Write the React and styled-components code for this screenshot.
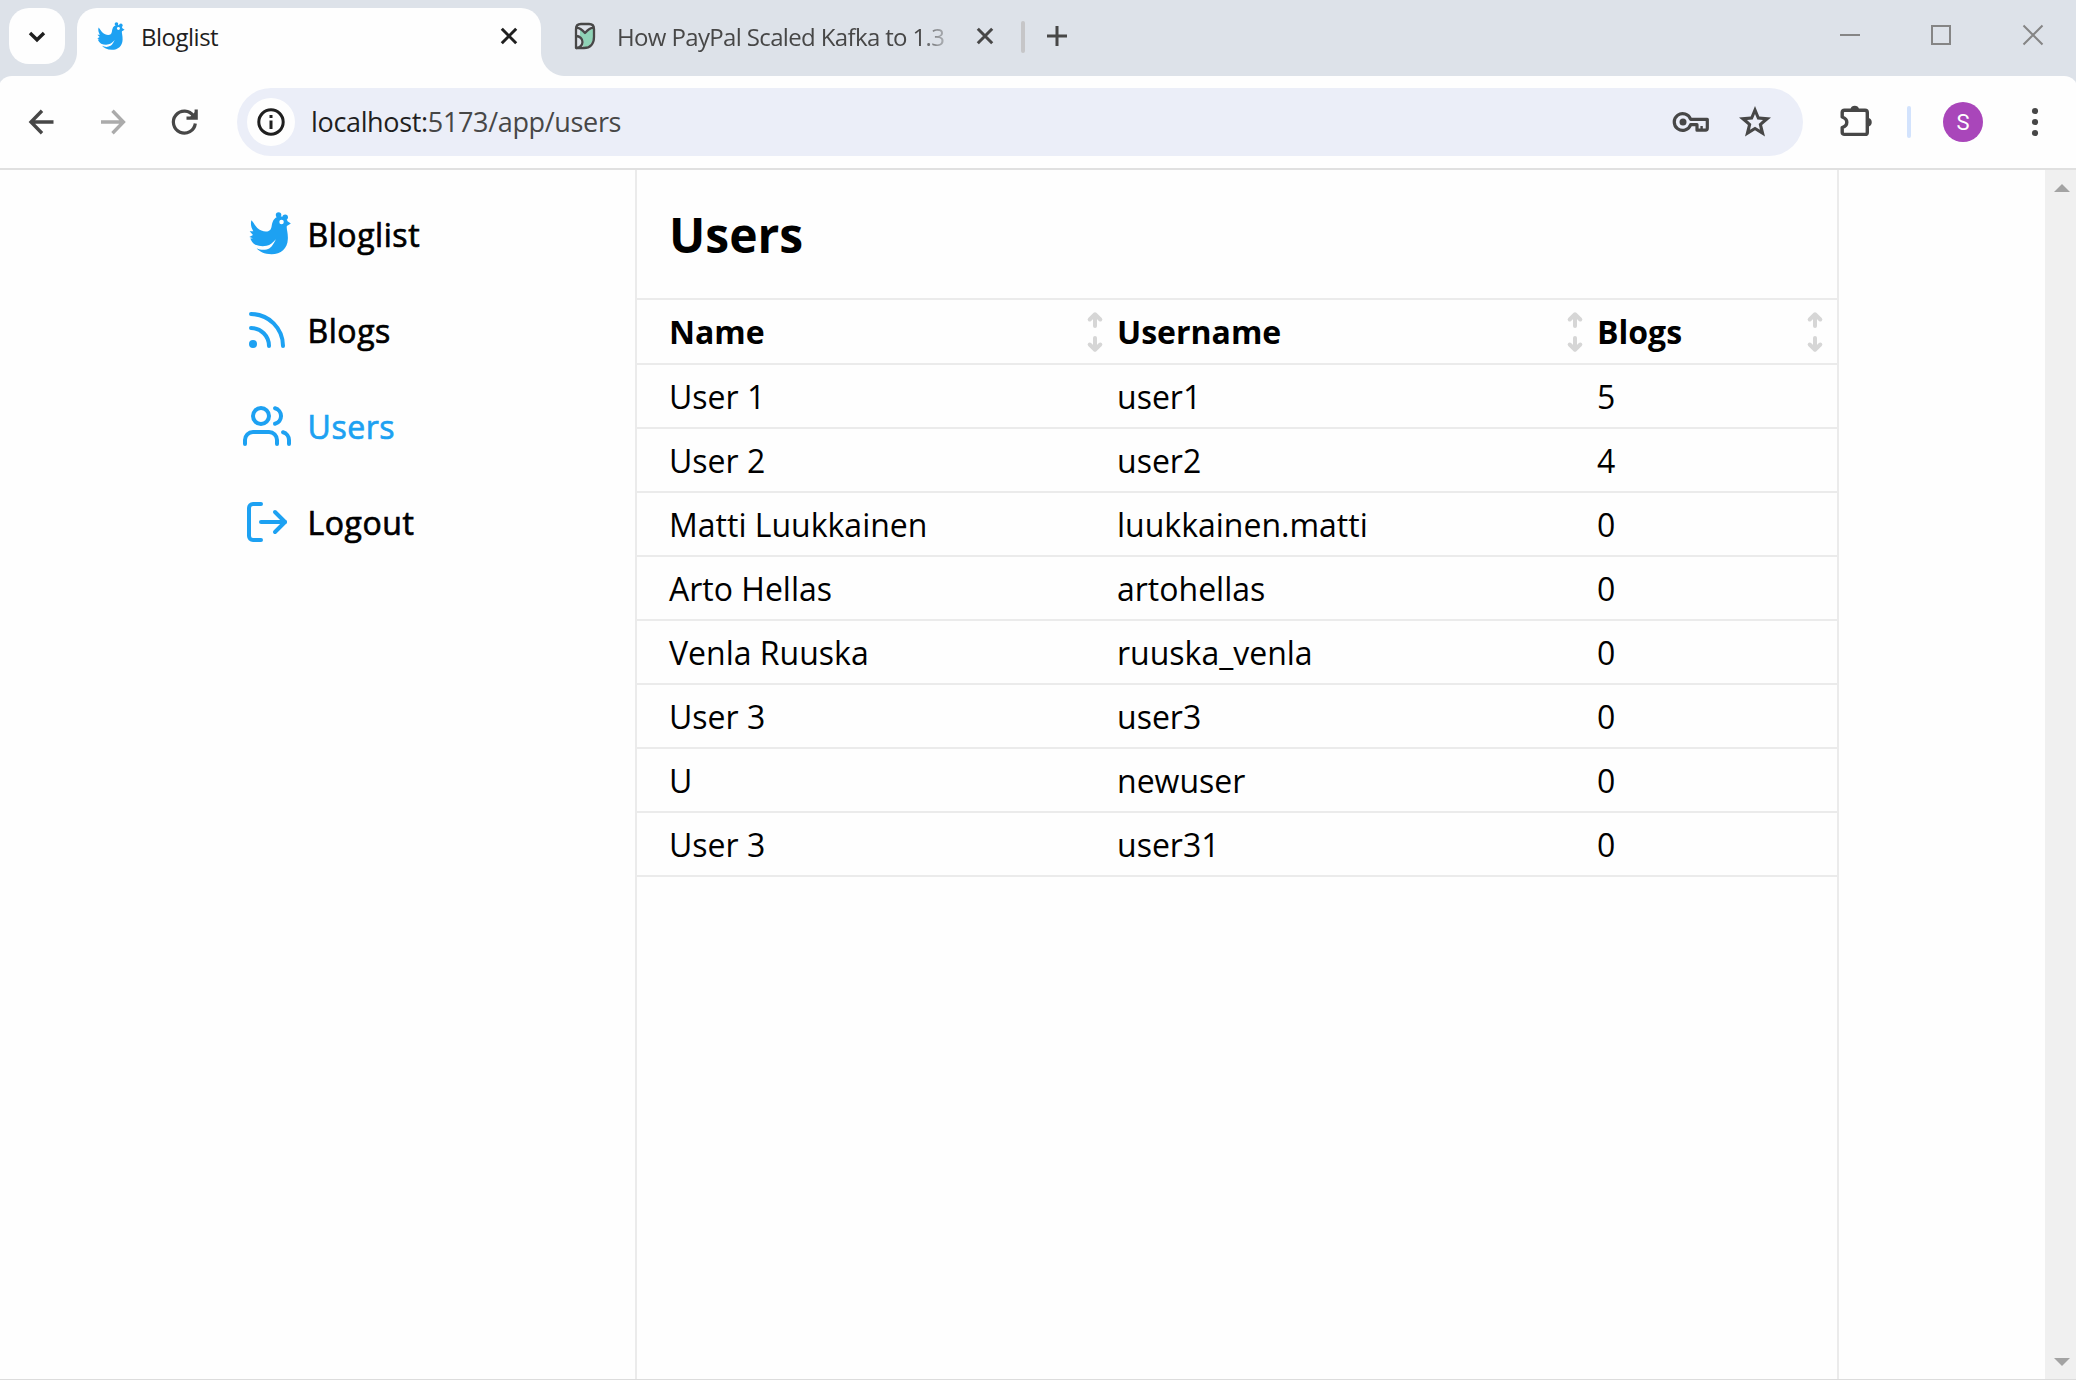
import React from "react";
import styled, { createGlobalStyle, css } from "styled-components";
import { FiRss, FiUsers, FiLogOut } from "react-icons/fi";

const GlobalStyle = createGlobalStyle`
  *, *::before, *::after { box-sizing: border-box; }
  html, body, #root { height: 100%; margin: 0; }
  body {
    overflow: hidden;
    background: #fefefe;
    color: #000;
    font-family: "Open Sans", "Noto Sans", sans-serif;
  }
  svg { display: block; flex: none; overflow: visible; }
`;

const Window = styled.div`
  display: flex;
  flex-direction: column;
  width: 2076px;
  height: 1380px;
  overflow: hidden;
  border-bottom: 1px solid #dcdcdc;
`;

/* ---------- browser chrome ---------- */

const TabStrip = styled.div`
  display: flex;
  height: 76px;
  padding: 8px 33px 0 9px;
  background: #dde2e9;
`;

const TabSearch = styled.div`
  display: flex;
  align-items: center;
  justify-content: center;
  width: 56px;
  height: 56px;
  margin-right: 12px;
  border-radius: 20px;
  background: #fefefe;
`;

const Tab = styled.div`
  position: relative;
  display: flex;
  align-items: center;
  height: ${(p) => (p.$active ? "68px" : "56px")};
  width: ${(p) => (p.$active ? "464px" : "480px")};
  padding: ${(p) => (p.$active ? "0 24px 12px 20px" : "0 28px 0 34px")};
  border-radius: 20px 20px 0 0;
  color: ${(p) => (p.$active ? "#1f1f1f" : "#474747")};

  ${(p) =>
    p.$active &&
    css`
      background: #fefefe;
      &::before,
      &::after {
        content: "";
        position: absolute;
        bottom: 0;
        width: 24px;
        height: 24px;
      }
      &::before {
        right: 100%;
        background: radial-gradient(circle at 0 0, transparent 23.5px, #fefefe 24.5px);
      }
      &::after {
        left: 100%;
        background: radial-gradient(circle at 100% 0, transparent 23.5px, #fefefe 24.5px);
      }
    `}
`;

const TabTitle = styled.span`
  flex: 1;
  overflow: hidden;
  margin: 2px 0 0 ${(p) => p.$gap}px;
  font-size: 24px;
  line-height: 36px;
  letter-spacing: ${(p) => p.$tracking}px;
  white-space: nowrap;
  ${(p) =>
    p.$fade &&
    css`
      flex: none;
      width: 328px;
      margin-right: 32px;
      -webkit-mask-image: linear-gradient(90deg, #000 302px, rgba(0, 0, 0, 0.3) 328px);
      mask-image: linear-gradient(90deg, #000 302px, rgba(0, 0, 0, 0.3) 328px);
    `}
`;

const TabDivider = styled.div`
  width: 4px;
  height: 32px;
  margin: 13px 22px 0 0;
  border-radius: 2px;
  background: #c6c6c8;
`;

const NewTab = styled.div`
  display: flex;
  align-items: center;
  height: 56px;
`;

const WindowControls = styled.div`
  display: flex;
  gap: 72px;
  margin-left: auto;
  padding-top: 17px;
`;

const Toolbar = styled.div`
  height: 94px;
  background: #dde2e9;
`;

const ToolbarInner = styled.div`
  display: flex;
  align-items: center;
  height: 94px;
  margin: 0 -2px;
  padding: 0 29px 0 29px;
  border-bottom: 2px solid #e0e0e0;
  border-radius: 14px 14px 0 0;
  background: #fefefe;
`;

const NavButtons = styled.div`
  display: flex;
  gap: 44px;
  width: 210px;
`;

const AddressBar = styled.div`
  display: flex;
  align-items: center;
  width: 1566px;
  height: 68px;
  padding: 0 32px 0 10px;
  border-radius: 34px;
  background: #ebeef8;
`;

const SiteInfo = styled.div`
  display: flex;
  align-items: center;
  justify-content: center;
  width: 48px;
  height: 48px;
  border-radius: 50%;
  background: #fefefe;
`;

const Url = styled.span`
  flex: 1;
  margin-left: 16px;
  color: #474747;
  font-size: 27px;
  line-height: 40px;
  letter-spacing: -0.34px;
`;

const Host = styled.span`
  color: #1f1f1f;
`;

const AddressActions = styled.div`
  display: flex;
  align-items: center;
  gap: 30px;
`;

const ToolbarEnd = styled.div`
  display: flex;
  align-items: center;
  margin-left: 37px;
`;

const Raised = styled.span`
  display: flex;
  padding-bottom: ${(p) => p.$by}px;
`;

const ToolbarDivider = styled.div`
  width: 4px;
  height: 32px;
  margin: 0 32px 0 34px;
  border-radius: 2px;
  background: #d3e3fd;
`;

const Avatar = styled.div`
  display: flex;
  align-items: center;
  justify-content: center;
  width: 40px;
  height: 40px;
  margin-right: 49px;
  border-radius: 50%;
  background: #a946ba;
  color: #fff;
  font-family: Roboto, sans-serif;
  font-size: 22px;
`;

/* ---------- page ---------- */

const Page = styled.div`
  display: flex;
  flex: 1;
  min-height: 0;
`;

const Sidebar = styled.nav`
  display: flex;
  flex-direction: column;
  gap: 32px;
  width: 635px;
  padding: 33px 0 0 243px;
`;

const NavItem = styled.a`
  display: flex;
  align-items: center;
  gap: 16.5px;
  height: 64px;
  color: ${(p) => (p.$active ? "#1da1f2" : "#000")};
  font-size: 32px;
  font-weight: 500;
  line-height: 64px;
  letter-spacing: 0.55px;
  -webkit-text-stroke: 0.7px currentColor;
`;

const NavIcon = styled.span`
  display: flex;
  justify-content: center;
  align-items: center;
  width: 48px;
  height: 48px;
  margin-bottom: 3px;
  color: #1da1f2;
`;

const BirdSlot = styled(NavIcon)`
  justify-content: flex-end;
`;

const Main = styled.main`
  width: 1204px;
  border: solid #ebebeb;
  border-width: 0 2px;
`;

const PageHeader = styled.header`
  display: flex;
  align-items: center;
  height: 130px;
  padding: 0 32px;
  border-bottom: 2px solid #ebebeb;
`;

const Title = styled.h1`
  margin: 2px 0 0;
  font-size: 48px;
  font-weight: 700;
  line-height: 64px;
`;

const Row = styled.div`
  display: grid;
  grid-template-columns: 480px 480px 240px;
  align-items: center;
  height: ${(p) => (p.$head ? 65 : 64)}px;
  padding-top: ${(p) => (p.$head ? 0 : 2)}px;
  border-bottom: 2px solid #ebebeb;
  font-size: 32px;
  font-weight: ${(p) => (p.$head ? 700 : 400)};
  line-height: 44px;
`;

const Cell = styled.div`
  display: flex;
  align-items: center;
  justify-content: space-between;
  padding: 0 14px 0 ${(p) => (p.$first ? 32 : 0)}px;
`;

const ScrollTrack = styled.div`
  display: flex;
  flex-direction: column;
  align-items: center;
  justify-content: space-between;
  width: 31px;
  margin-left: auto;
  padding: 14px 0 13px 2px;
  background: #f0f0f0;
`;

/* ---------- icons ---------- */

const Stroke = ({ w, h, color, sw, cap = "butt", d }) => (
  <svg width={w} height={h} viewBox={`0 0 ${w} ${h}`} fill="none" stroke={color} strokeWidth={sw} strokeLinecap={cap}>
    <path d={d} />
  </svg>
);

const Close = ({ color }) => (
  <Stroke w={16} h={16} color={color} sw={3} d="M0.8 0.8L15.2 15.2M15.2 0.8L0.8 15.2" />
);

const Bird = ({ size }) => (
  <svg width={size} height={size} viewBox="41 38 128 128" fill="#1da1f2">
    <circle cx="130" cy="47" r="8.300" />
    <circle cx="150" cy="53.500" r="8.300" />
    <path d="M48 63C56 70 58 79 66 86C73 92 83 97 92 97C102 97 107 93 109 82C111 68 115 57 126 53C138 49 155 53 157 66L167 73L155 80C153 89 159 99 158 119C157 148 137 165 109 165C87 165 72 157 64 147C76 153 91 154 103 147C112 141 116 131 122 120C113 130 105 137 94 140C82 143 71 141 60 137C52 132 48 126 45 118L53 117L42 113L53 107L43 96L54 96C48 86 45 76 48 63Z" />
    <circle cx="139" cy="68" r="6.800" fill="#fefefe" />
  </svg>
);

const Owl = () => (
  <svg width="20" height="26" viewBox="0 0 20 26" fill="none" stroke="#474747" strokeWidth="2.3" strokeLinejoin="round">
    <path d="M5 5.500L10 10L18 5.500V15C17.500 20 14 24 8 25L8.500 18L5 13Z" fill="#8fd3b6" stroke="none" />
    <path d="M1 25V6C1 3 3 1 6 1H14C17 1 19 3 19 6V14C19 21 15 25 9 25Z" />
    <path d="M1 5C4 4.500 6 5.500 10 10C14 5.500 16 4.500 19 5" />
    <path d="M1 13C5 13 7.500 16 7.500 19C7.500 22 5 25 1 25" />
  </svg>
);

const Reload = () => (
  <svg width="28" height="28" viewBox="0 0 28 28" fill="none" stroke="#474747" strokeWidth="3.2">
    <path d="M24.300 15.500A11 11 0 1 1 22.500 8" />
    <path d="M25.200 1.500V10.200H15.500" />
    <path d="M25 3V10H18Z" fill="#474747" stroke="none" />
  </svg>
);

const Info = () => (
  <svg width="28" height="28" viewBox="0 0 28 28" fill="none" stroke="#1f1f1f" strokeWidth="3">
    <circle cx="14" cy="14" r="12.200" />
    <path d="M14 12.500V21M14 7V10" />
  </svg>
);

const Key = () => (
  <svg width="36" height="20" viewBox="0 0 36 20" fill="none" stroke="#474747" strokeWidth="3.200" strokeLinejoin="round">
    <path d="M17.600 7.300A8.400 8.400 0 1 0 17.600 12.700H24V18.200H32.500Q34.300 18.200 34.300 16V7.300Z" />
    <circle cx="10" cy="10" r="3.500" fill="#474747" stroke="none" />
    <path d="M28.600 14V18" strokeWidth="2.400" />
  </svg>
);

const Star = () => (
  <svg width="32" height="31" viewBox="0 0 32 31" fill="#474747">
    <path
      fillRule="evenodd"
      d="M16 0L20.300 10.600L32 11.600L23.100 19.100L26 30.500L16 24.300L6 30.500L8.900 19.100L0 11.600L11.700 10.600ZM16 8L13.700 13.400L8 14L12.300 17.900L11 23.800L16 20.700L21 23.800L19.700 17.900L24 14L18.300 13.400Z"
    />
  </svg>
);

const Puzzle = () => (
  <svg width="33" height="32" viewBox="0 0 33 32" fill="none" stroke="#474747" strokeWidth="3.400" strokeLinejoin="round">
    <path d="M4.500 6.200H25Q27.300 6.200 27.300 8.500V28.200Q27.300 30.400 25 30.400H4.500Q2.200 30.400 2.200 28.200V23.500Q6.800 22 6.800 18.200Q6.800 14.500 2.200 13V8.500Q2.200 6.200 4.500 6.200Z" />
    <path d="M10.500 5A4.400 4.400 0 0 1 19 5ZM28.500 14A4.400 4.400 0 0 1 28.500 22.500Z" fill="#474747" stroke="none" />
  </svg>
);

const Menu = () => (
  <svg width="6" height="28" viewBox="0 0 6 28" fill="#474747">
    <circle cx="3" cy="3" r="3.100" />
    <circle cx="3" cy="14" r="3.100" />
    <circle cx="3" cy="25" r="3.100" />
  </svg>
);

const Sort = () => (
  <svg width="16" height="40" viewBox="0 0 16 40" fill="none" stroke="#d6d6d6" strokeWidth="4" strokeLinecap="round" strokeLinejoin="round">
    <path d="M8 14V2.500M2.700 7.500L8 2.300L13.300 7.500M8 26V37.500M2.700 32.500L8 37.700L13.300 32.500" />
  </svg>
);

const ScrollArrow = ({ down }) => (
  <svg width="16" height="8" viewBox="0 0 16 8" fill="#a3a3a3">
    <path d={down ? "M0 0H16L8 8Z" : "M0 8H16L8 0Z"} />
  </svg>
);

/* ---------- data ---------- */

const links = [
  { label: "Bloglist", icon: <Bird size={42.5} />, bird: true },
  { label: "Blogs", icon: <FiRss size={48} /> },
  { label: "Users", icon: <FiUsers size={48} />, active: true },
  { label: "Logout", icon: <FiLogOut size={48} /> },
];

const users = [
  ["User 1", "user1", 5],
  ["User 2", "user2", 4],
  ["Matti Luukkainen", "luukkainen.matti", 0],
  ["Arto Hellas", "artohellas", 0],
  ["Venla Ruuska", "ruuska_venla", 0],
  ["User 3", "user3", 0],
  ["U", "newuser", 0],
  ["User 3", "user31", 0],
];

export default function App() {
  return (
    <Window>
      <GlobalStyle />
      <TabStrip>
        <TabSearch>
          <Stroke w={16} h={9} color="#1f1f1f" sw={3.4} d="M1 1L8 7.8L15 1" />
        </TabSearch>
        <Tab $active>
          <Bird size={28} />
          <TabTitle $gap={16} $tracking={-0.5}>Bloglist</TabTitle>
          <Close color="#1f1f1f" />
        </Tab>
        <Tab>
          <Owl />
          <TabTitle $gap={22} $tracking={-0.64} $fade>How PayPal Scaled Kafka to 1.3</TabTitle>
          <Close color="#474747" />
        </Tab>
        <TabDivider />
        <NewTab>
          <Stroke w={20} h={20} color="#474747" sw={3} d="M10 0V20M0 10H20" />
        </NewTab>
        <WindowControls>
          <Stroke w={20} h={20} color="#858585" sw={2} d="M1 10H21" />
          <Stroke w={20} h={20} color="#858585" sw={2} d="M1 1H19V19H1Z" />
          <Stroke w={20} h={20} color="#858585" sw={2} d="M0.500 0.500L19.500 19.500M19.500 0.500L0.500 19.500" />
        </WindowControls>
      </TabStrip>
      <Toolbar>
        <ToolbarInner>
          <NavButtons>
            <Stroke w={28} h={28} color="#474747" sw={3.4} d="M26.500 14H4.500M15 2.800L4 14L15 25.200" />
            <Stroke w={28} h={28} color="#ababab" sw={3.4} d="M2 14H24M13.500 2.800L24.400 14L13.500 25.200" />
            <Reload />
          </NavButtons>
          <AddressBar>
            <SiteInfo>
              <Info />
            </SiteInfo>
            <Url>
              <Host>localhost:</Host>5173/app/users
            </Url>
            <AddressActions>
              <Key />
              <Raised $by={1}>
                <Star />
              </Raised>
            </AddressActions>
          </AddressBar>
          <ToolbarEnd>
            <Raised $by={4}>
              <Puzzle />
            </Raised>
            <ToolbarDivider />
            <Avatar>S</Avatar>
            <Menu />
          </ToolbarEnd>
        </ToolbarInner>
      </Toolbar>
      <Page>
        <Sidebar>
          {links.map((l) => (
            <NavItem key={l.label} $active={l.active}>
              {l.bird ? <BirdSlot>{l.icon}</BirdSlot> : <NavIcon>{l.icon}</NavIcon>}
              {l.label}
            </NavItem>
          ))}
        </Sidebar>
        <Main>
          <PageHeader>
            <Title>Users</Title>
          </PageHeader>
          <Row $head>
            {["Name", "Username", "Blogs"].map((h, i) => (
              <Cell key={h} $first={i === 0}>
                {h}
                <Sort />
              </Cell>
            ))}
          </Row>
          {users.map(([name, username, blogs]) => (
            <Row key={username}>
              <Cell $first>{name}</Cell>
              <Cell>{username}</Cell>
              <Cell>{blogs}</Cell>
            </Row>
          ))}
        </Main>
        <ScrollTrack>
          <ScrollArrow />
          <ScrollArrow down />
        </ScrollTrack>
      </Page>
    </Window>
  );
}
